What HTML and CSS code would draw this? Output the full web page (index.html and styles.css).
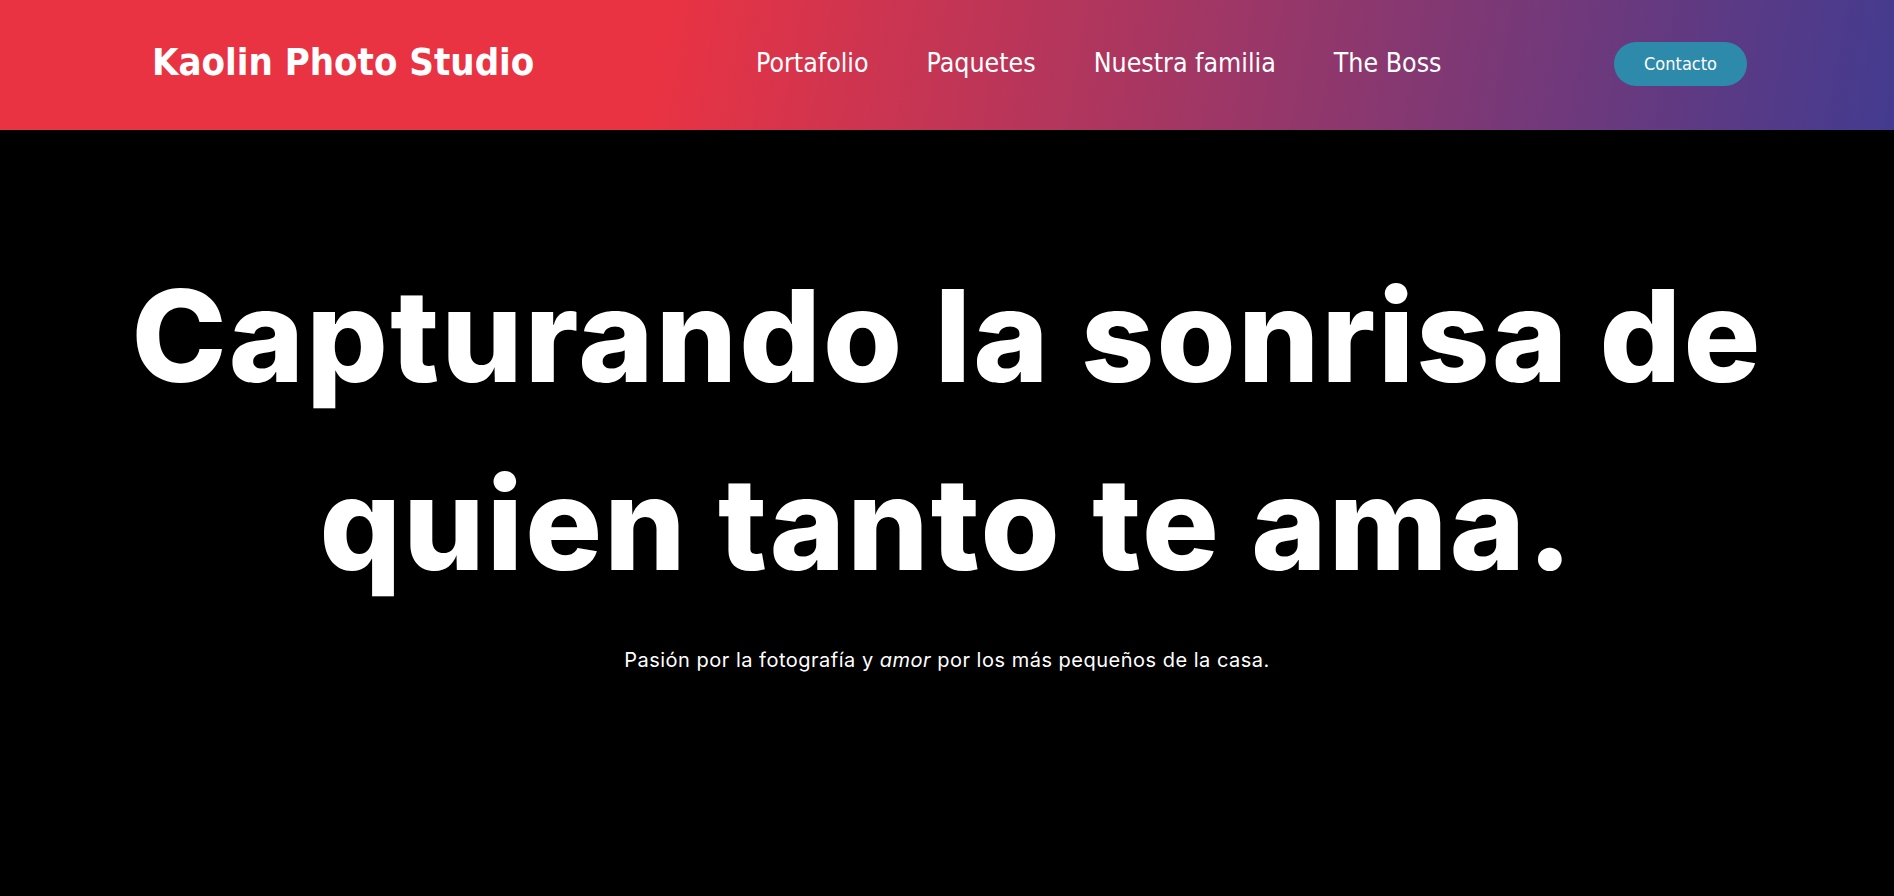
FILE: index.html
```html
<!DOCTYPE html>
<html lang="es">
<head>
<meta charset="utf-8">
<title>Kaolin Photo Studio</title>
<link rel="stylesheet" href="styles.css">
</head>
<body>
<header class="topbar">
  <a class="logo" href="#">Kaolin Photo Studio</a>
  <nav class="nav">
    <a href="#">Portafolio</a>
    <a href="#">Paquetes</a>
    <a href="#">Nuestra familia</a>
    <a href="#">The Boss</a>
  </nav>
  <a class="cta" href="#">Contacto</a>
</header>
<main class="hero">
  <h1 class="hero-title">Capturando la sonrisa de<br>quien tanto te ama.</h1>
  <p class="hero-sub">Pasión por la fotografía y <em>amor</em> por los más pequeños de la casa.</p>
</main>
</body>
</html>
```
FILE: styles.css
```css
* { box-sizing: border-box; }
html, body { margin: 0; padding: 0; }
body {
  background: #000;
  color: #fff;
  font-family: "Inter", "DejaVu Sans", sans-serif;
  min-height: 896px;
}
a { color: inherit; text-decoration: none; }

.topbar {
  height: 130px;
  display: flex;
  align-items: center;
  padding: 0 147px 6px 152px;
  background: linear-gradient(100deg, #e93343 0%, #e93343 35%, #433b90 100%);
}
.logo {
  flex: 0 0 604px;
  font-family: "DejaVu Sans Condensed", "DejaVu Sans", sans-serif;
  font-stretch: condensed;
  font-weight: 700;
  font-size: 38px;
  color: #fff;
}
.nav {
  display: flex;
  gap: 58px;
  font-family: "DejaVu Sans Condensed", "DejaVu Sans", sans-serif;
  font-stretch: condensed;
  font-size: 26.5px;
}
.cta {
  margin-left: auto;
  margin-top: 3px;
  width: 133px;
  height: 44px;
  border-radius: 22px;
  background: #2e8aab;
  display: flex;
  align-items: center;
  justify-content: center;
  font-family: "DejaVu Sans Condensed", "DejaVu Sans", sans-serif;
  font-stretch: condensed;
  font-size: 18px;
}

.hero {
  text-align: center;
  padding-top: 112px;
}
.hero-title {
  margin: 0;
  font-family: "Inter", sans-serif;
  font-weight: 800;
  font-size: 128px;
  line-height: 188px;
  letter-spacing: 2.2px;
}
.hero-sub {
  margin: 30px 0 0;
  font-family: "Inter", sans-serif;
  font-size: 20px;
  letter-spacing: 0.5px;
}
```
